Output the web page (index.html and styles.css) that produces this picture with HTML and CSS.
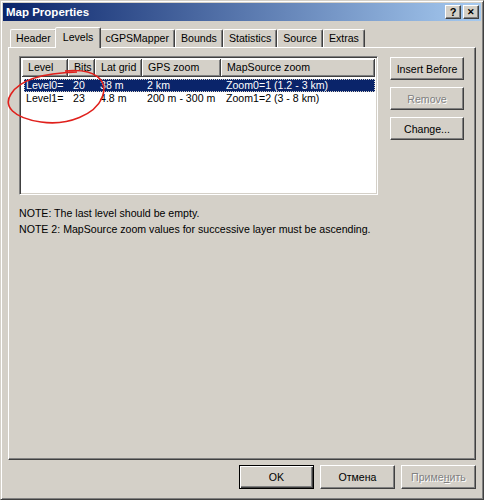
FILE: index.html
```html
<!DOCTYPE html>
<html lang="en">
<head>
    <meta charset="UTF-8">
    <title>Map Properties</title>
    <link rel="stylesheet" href="styles.css">
</head>
<body>
    <div class="window">
        <div class="titlebar">
            <span class="title">Map Properties</span>
            <div class="caption-buttons">
                <span class="cap-btn">?</span>
                <span class="cap-btn close">&#x2715;</span>
            </div>
        </div>

        <div class="tabs">
            <div class="tab">Header</div>
            <div class="tab active">Levels</div>
            <div class="tab">cGPSMapper</div>
            <div class="tab">Bounds</div>
            <div class="tab">Statistics</div>
            <div class="tab">Source</div>
            <div class="tab">Extras</div>
        </div>

        <div class="panel">
            <div class="panel-top">
                <div class="listview">
                    <div class="lv-head">
                        <div class="lv-col">Level</div>
                        <div class="lv-col">Bits</div>
                        <div class="lv-col">Lat grid</div>
                        <div class="lv-col">GPS zoom</div>
                        <div class="lv-col">MapSource zoom</div>
                    </div>
                    <div class="lv-row selected">
                        <div class="lv-cell">Level0=</div>
                        <div class="lv-cell">20</div>
                        <div class="lv-cell">38 m</div>
                        <div class="lv-cell">2 km</div>
                        <div class="lv-cell">Zoom0=1 (1.2 - 3 km)</div>
                    </div>
                    <div class="lv-row">
                        <div class="lv-cell">Level1=</div>
                        <div class="lv-cell">23</div>
                        <div class="lv-cell">4.8 m</div>
                        <div class="lv-cell">200 m - 300 m</div>
                        <div class="lv-cell">Zoom1=2 (3 - 8 km)</div>
                    </div>
                </div>
                <div class="side-buttons">
                    <button class="btn">Insert Before</button>
                    <button class="btn" disabled>Remove</button>
                    <button class="btn">Change...</button>
                </div>
            </div>
            <p class="note">NOTE: The last level should be empty.</p>
            <p class="note">NOTE 2: MapSource zoom values for successive layer must be ascending.</p>
        </div>

        <div class="footer">
            <button class="btn default">OK</button>
            <button class="btn">Отмена</button>
            <button class="btn" disabled>Приме<u>н</u>ить</button>
        </div>

        <!-- hand drawn mark over the first two columns -->
        <svg class="mark" width="110" height="60" viewBox="0 0 110 60">
            <path d="M60 3 C 90 0, 104 12, 97 30 C 90 46, 64 58, 36 54 C 8 50, -2 38, 6 26 C 14 13, 36 5, 72 4"
                  fill="none" stroke="#e0201c" stroke-width="1.6"/>
        </svg>
    </div>
</body>
</html>
```

FILE: styles.css
```css
body {
    margin: 0;
    padding: 0;
    font-family: "Liberation Sans", Arial, sans-serif;
    font-size: 10.6px;
    color: #000;
}

.window {
    position: relative;
    width: 484px;
    height: 500px;
    box-sizing: border-box;
    background-color: #d4d0c8;
    border: 1px solid;
    border-color: #d4d0c8 #404040 #404040 #d4d0c8;
    box-shadow: inset 1px 1px 0 #fff, inset -1px -1px 0 #808080;
    padding: 2px;
}

.titlebar {
    height: 18px;
    display: flex;
    align-items: center;
    justify-content: space-between;
    padding: 0 2px 0 3px;
    background: linear-gradient(to right, #0a246a, #a6caf0);
}

.title {
    color: #fff;
    font-weight: bold;
    font-size: 11.5px;
}

.caption-buttons {
    display: flex;
    gap: 2px;
}

.cap-btn {
    width: 16px;
    height: 14px;
    box-sizing: border-box;
    background-color: #d4d0c8;
    border: 1px solid;
    border-color: #fff #404040 #404040 #fff;
    box-shadow: inset -1px -1px 0 #808080;
    font-weight: bold;
    font-size: 11px;
    line-height: 12px;
    text-align: center;
}

.cap-btn.close {
    font-size: 9px;
}

/* tabs */
.tabs {
    display: flex;
    align-items: flex-end;
    height: 20px;
    margin: 6px 0 0 7px;
    position: relative;
    z-index: 1;
}

.tab {
    height: 17px;
    line-height: 17px;
    padding: 0 5px;
    border: 1px solid;
    border-bottom: none;
    border-color: #fff #404040 transparent #fff;
    box-shadow: inset -1px 0 0 #808080;
    border-radius: 2px 2px 0 0;
}

.tab.active {
    height: 20px;
    line-height: 18px;
    margin: 0 -2px -1px;
    padding: 0 7px;
    background-color: #d4d0c8;
    position: relative;
    z-index: 2;
}

.panel {
    margin-left: 5px;
    width: 468px;
    height: 413px;
    box-sizing: border-box;
    border: 1px solid;
    border-color: #fff #404040 #404040 #fff;
    box-shadow: inset -1px -1px 0 #808080;
    padding: 8px 10px;
}

.panel-top {
    display: flex;
    align-items: flex-start;
    gap: 12px;
}

.listview {
    width: 359px;
    height: 139px;
    box-sizing: border-box;
    background-color: #fff;
    border: 1px solid;
    border-color: #808080 #fff #fff #808080;
    box-shadow: inset 1px 1px 0 #404040, inset -1px -1px 0 #d4d0c8;
    padding: 2px;
}

.lv-head,
.lv-row {
    display: grid;
    grid-template-columns: 46px 27px 47px 79px 1fr;
}

.lv-col {
    height: 18px;
    line-height: 17px;
    box-sizing: border-box;
    padding-left: 6px;
    background-color: #d4d0c8;
    border-right: 1px solid #404040;
    border-bottom: 1px solid #404040;
    box-shadow: inset 1px 1px 0 #fff, inset -1px -1px 0 #808080;
    white-space: nowrap;
    overflow: hidden;
}

.lv-row {
    height: 13px;
    line-height: 13px;
    margin-left: 2px;
}

.lv-head + .lv-row {
    margin-top: 2px;
}

.lv-row.selected {
    background-color: #0a246a;
    color: #fff;
    outline: 1px dotted #d4d0c8;
    outline-offset: -1px;
}

.lv-cell {
    padding-left: 3px;
    white-space: nowrap;
}

.lv-cell:first-child {
    padding-left: 2px;
}

.side-buttons {
    display: flex;
    flex-direction: column;
    gap: 7px;
    padding-top: 1px;
}

.btn {
    width: 74px;
    height: 23px;
    box-sizing: border-box;
    padding: 0;
    font-family: "Liberation Sans", Arial, sans-serif;
    font-size: 10.6px;
    color: #000;
    background-color: #d4d0c8;
    border: 1px solid;
    border-color: #fff #404040 #404040 #fff;
    box-shadow: inset -1px -1px 0 #808080;
    border-radius: 0;
}

.btn:disabled {
    color: #808080;
    text-shadow: 1px 1px 0 #fff;
}

.btn.default {
    border: 1px solid #000;
    box-shadow: inset 1px 1px 0 #fff, inset -1px -1px 0 #404040, inset -2px -2px 0 #808080;
}

.note {
    margin: 0;
    line-height: 16px;
}

.panel-top + .note {
    margin-top: 10px;
}

.footer {
    display: flex;
    justify-content: flex-end;
    gap: 6px;
    padding: 5px 5px 0 0;
}

.footer .btn {
    width: 75px;
    height: 24px;
}

.mark {
    position: absolute;
    left: 4px;
    top: 67px;
}
```
